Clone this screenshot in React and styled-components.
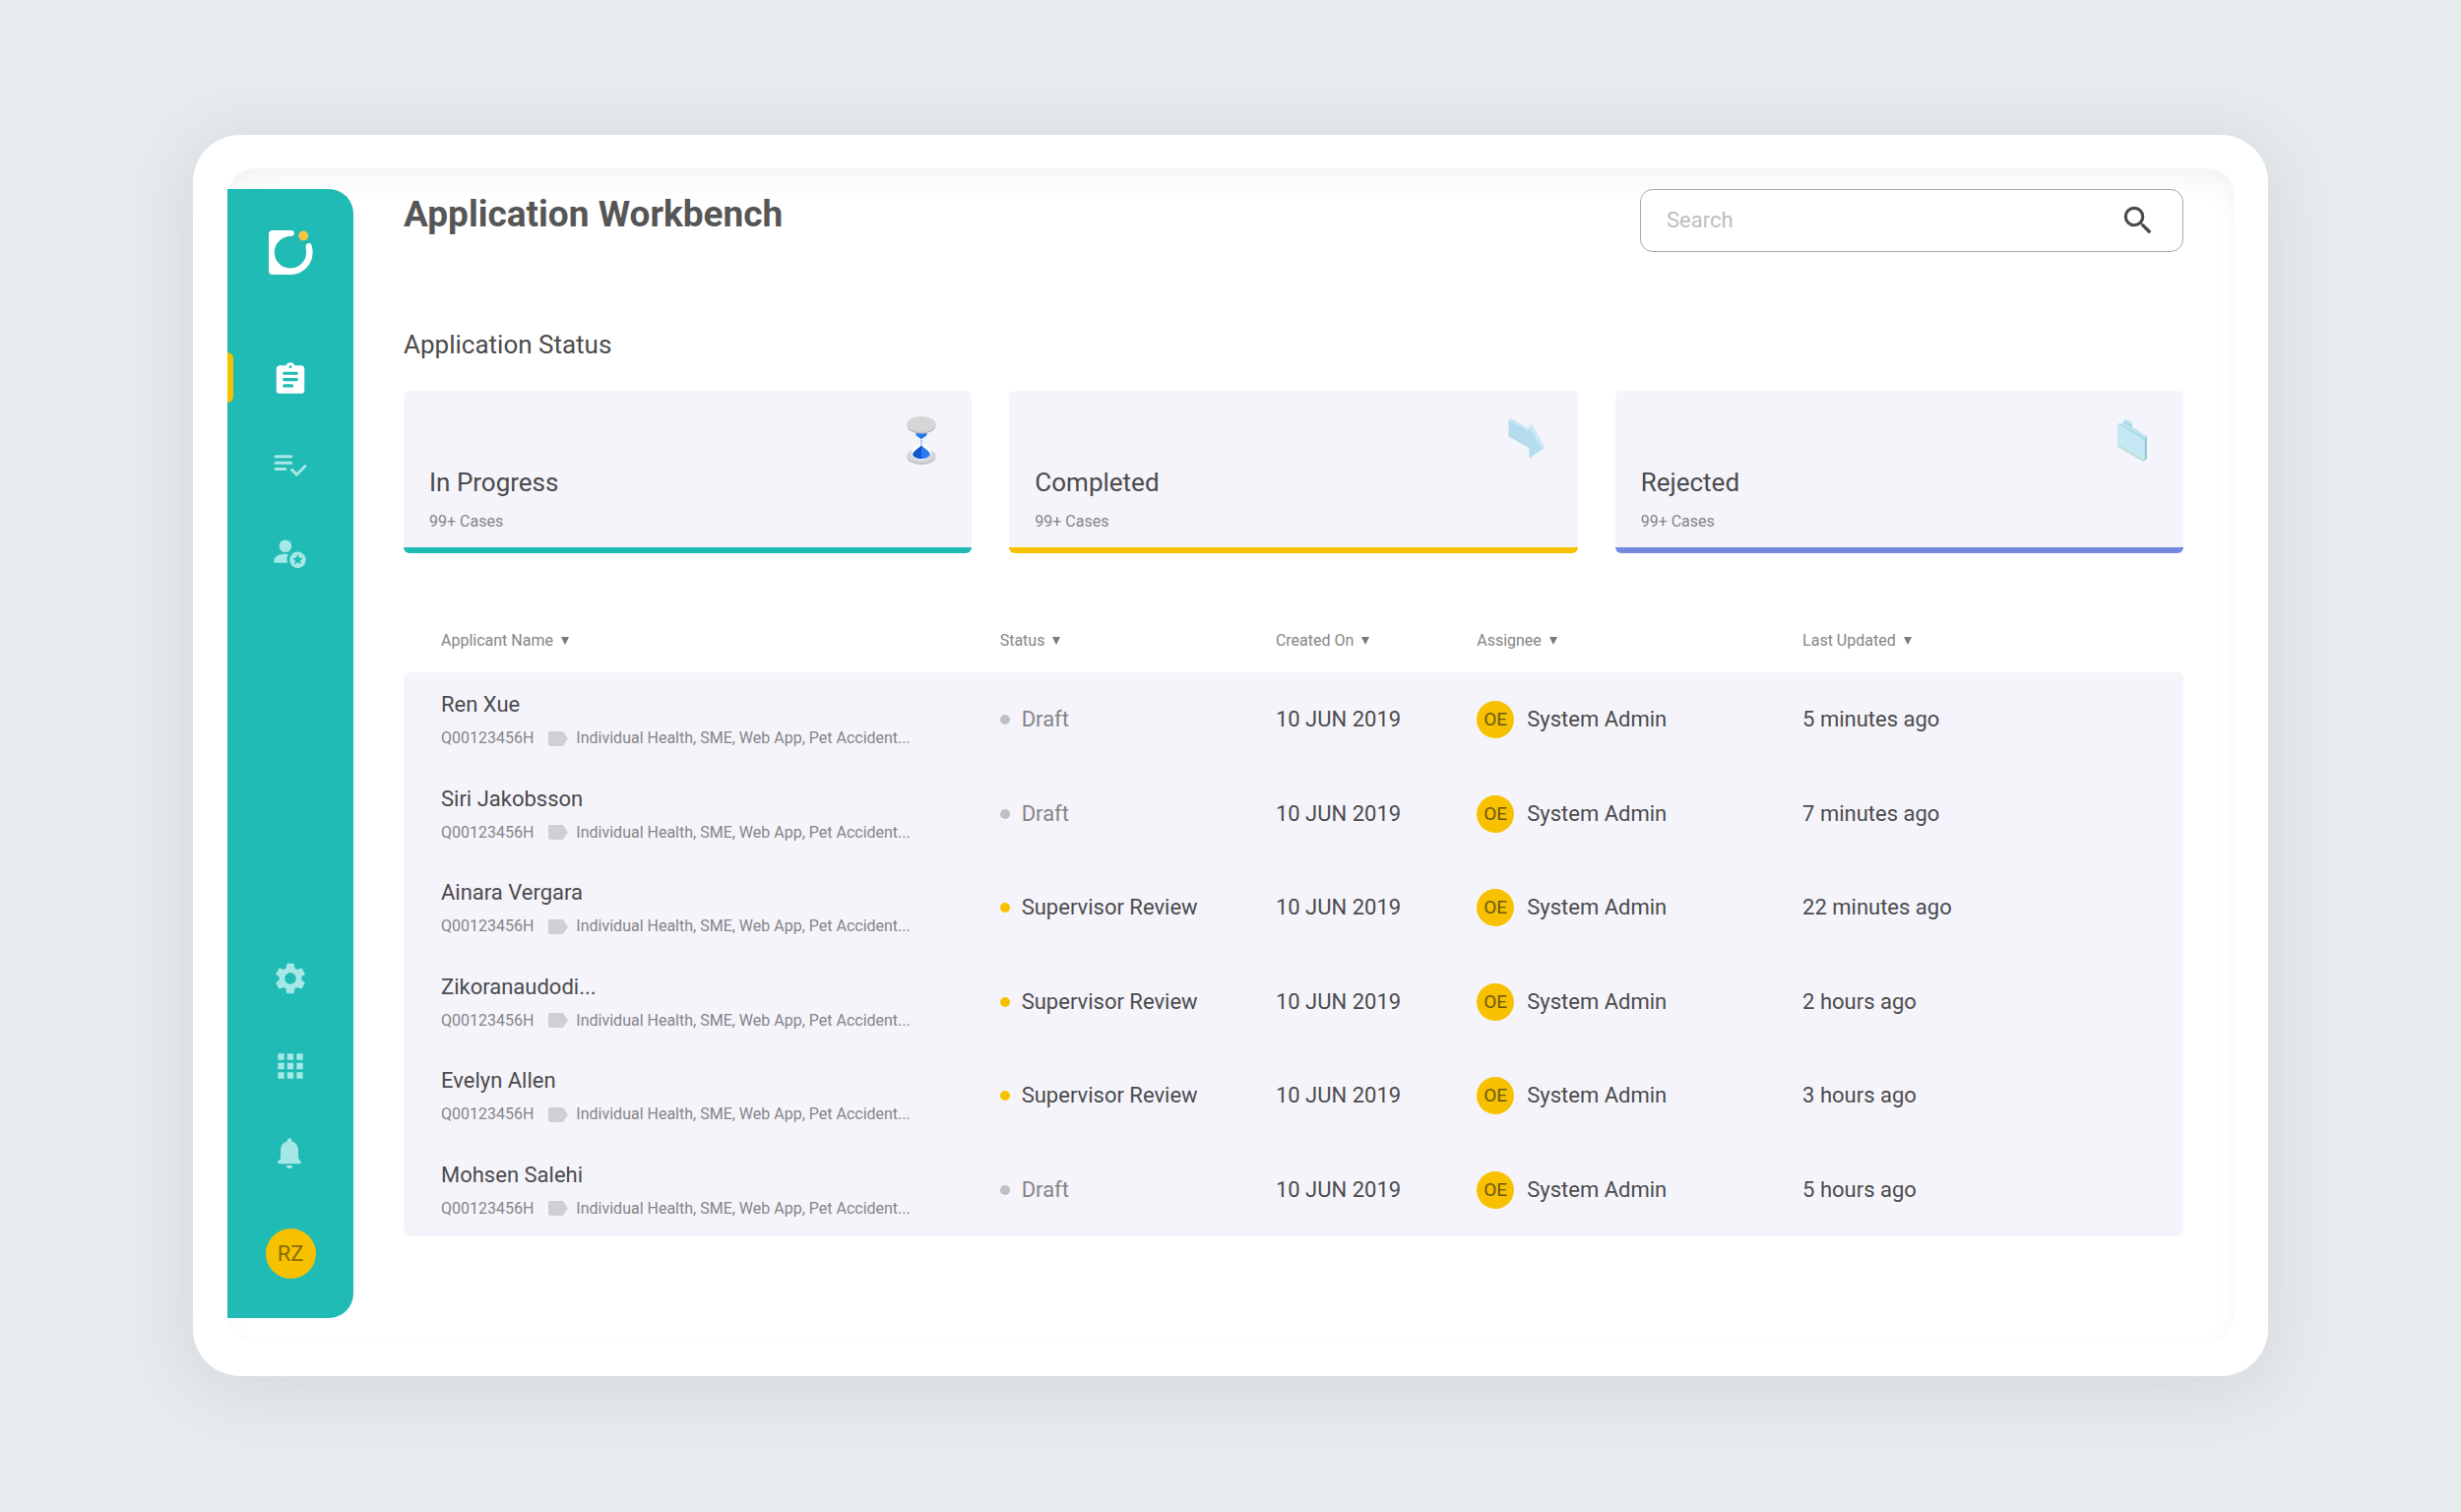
import React from "react";
import styled, { createGlobalStyle } from "styled-components";
import { MdSearch, MdSettings, MdApps } from "react-icons/md";

const teal = "#1fbbb4";
const yellow = "#f8c100";
const ink = "#4b4b4d";
const muted = "#858588";
const panel = "#f5f4fb";

const GlobalStyle = createGlobalStyle`
  *, *::before, *::after { box-sizing: border-box; }
  body {
    margin: 0;
    background: #e6ebee;
    color: ${ink};
    font-family: Roboto, "Liberation Sans", sans-serif;
    font-size: 22px;
    line-height: 28px;
  }
  h1, h2, h3, p, ul { margin: 0; padding: 0; font-weight: 400; }
  button, input { font: inherit; color: inherit; }
  button { border: 0; padding: 0; background: none; cursor: pointer; }
`;

const Page = styled.div`
  display: flex;
  min-height: 100vh;
  padding: 137px 196px 138px;
`;

const Frame = styled.div`
  display: flex;
  flex: 1;
  min-width: 0;
  padding: 34px 34px 34px 35px;
  border-radius: 48px;
  background: #fff;
  box-shadow: 0 10px 70px rgba(60, 60, 70, 0.12);
`;

const Screen = styled.div`
  display: flex;
  flex: 1;
  min-width: 0;
  padding: 21px 0 25px;
  border-radius: 28px;
  background: #fff;
  box-shadow: inset 0 16px 34px -10px rgba(0, 0, 0, 0.06), inset 0 0 24px rgba(0, 0, 0, 0.012);
`;

const Sidebar = styled.aside`
  display: flex;
  flex-direction: column;
  align-items: center;
  flex: none;
  width: 128px;
  padding: 39px 0 40px;
  border-radius: 0 25px 25px 0;
  background: ${teal};
`;

const HomeLink = styled.a`
  display: grid;
  place-items: center;
  width: 51px;
  height: 51px;
`;

const NavGroup = styled.nav`
  display: flex;
  flex-direction: column;
  gap: 38px;
  width: 100%;
  margin-top: ${(p) => (p.$bottom ? "auto" : "76px")};
`;

const NavItem = styled.a`
  position: relative;
  display: grid;
  place-items: center;
  height: 51px;
  color: ${(p) => (p.$active ? "#fff" : "#a6e8e5")};

  &::before {
    content: "";
    display: ${(p) => (p.$active ? "block" : "none")};
    position: absolute;
    left: 0;
    top: 0;
    width: 6px;
    height: 100%;
    border-radius: 0 6px 6px 0;
    background: ${yellow};
  }

  svg { width: 38px; height: 38px; }
`;

const ProfileButton = styled.button`
  width: 51px;
  height: 51px;
  margin-top: 51px;
  border-radius: 50%;
  background: ${yellow};
  color: #8a6c08;
`;

const Main = styled.main`
  flex: 1;
  min-width: 0;
  padding: 0 52px 0 51px;
`;

const Header = styled.header`
  display: flex;
  justify-content: space-between;
  align-items: flex-start;
`;

const PageTitle = styled.h1`
  font-size: 37px;
  font-weight: 700;
  line-height: 52px;
  color: #565656;
`;

const SearchBox = styled.form`
  display: flex;
  align-items: center;
  width: 552px;
  height: 64px;
  padding: 0 26px;
  border: 1px solid #acacac;
  border-radius: 13px;
  background: #fff;

  button { display: grid; color: #4a4a4a; }
  svg { width: 38px; height: 38px; }
`;

const SearchInput = styled.input`
  flex: 1;
  min-width: 0;
  padding: 0;
  border: 0;
  outline: 0;
  background: none;

  &::placeholder { color: #bdbdbd; opacity: 1; }
`;

const SectionTitle = styled.h2`
  margin-top: 79px;
  font-size: 26px;
  line-height: 30px;
`;

const Cards = styled.div`
  display: grid;
  grid-template-columns: repeat(3, 1fr);
  gap: 38px;
  margin-top: 32px;
`;

const Card = styled.article`
  display: flex;
  flex-direction: column;
  padding: 26px 26px 16px;
  border-bottom: 6px solid ${(p) => p.$accent};
  border-radius: 6px;
  background: ${panel};

  svg { width: 51px; height: 51px; align-self: flex-end; }
`;

const CardTitle = styled.h3`
  margin-top: 1px;
  font-size: 26px;
  line-height: 30px;
`;

const CardCount = styled.p`
  margin-top: 15px;
  font-size: 16px;
  line-height: 20px;
  color: ${muted};
`;

const Table = styled.table`
  width: 100%;
  margin-top: 57px;
  border-collapse: separate;
  border-spacing: 0;
  table-layout: fixed;
  white-space: nowrap;
`;

const HeadCell = styled.th`
  width: ${(p) => p.$width};
  height: 64px;
  padding: 0 0 0 ${(p) => (p.$first ? "38px" : "0")};
  text-align: left;
  font-weight: 400;
`;

const SortButton = styled.button`
  display: flex;
  align-items: center;
  gap: 8px;
  font-size: 16px;
  line-height: 20px;
  color: ${muted};

  svg { width: 8px; height: 8px; }
`;

const Row = styled.tr`
  height: 95px;
  &:nth-child(odd) { height: 96px; }
  &:first-child td:first-child { border-top-left-radius: 6px; }
  &:first-child td:last-child { border-top-right-radius: 6px; }
  &:last-child td:first-child { border-bottom-left-radius: 6px; }
  &:last-child td:last-child { border-bottom-right-radius: 6px; }
`;

const Cell = styled.td`
  padding: 0;
  background: ${panel};
  &:first-child { padding-left: 38px; }
`;

const Details = styled.div`
  display: flex;
  align-items: center;
  margin-top: 10px;
  font-size: 16px;
  line-height: 20px;
  color: ${muted};

  svg { width: 20px; height: 15px; margin: 0 8px 0 15px; }
`;

const Status = styled.div`
  display: flex;
  align-items: center;
  gap: 12px;
  color: ${(p) => (p.$draft ? muted : ink)};

  &::before {
    content: "";
    width: 10px;
    height: 10px;
    border-radius: 50%;
    background: ${(p) => (p.$draft ? "#c0c0c3" : yellow)};
  }
`;

const Assignee = styled.div`
  display: flex;
  align-items: center;
  gap: 13px;
`;

const Initials = styled.span`
  display: grid;
  place-items: center;
  width: 38px;
  height: 38px;
  border-radius: 50%;
  background: ${yellow};
  font-size: 19px;
  color: #6b5716;
`;

const Logo = () => (
  <svg width="45" height="45" viewBox="0 0 45 45" aria-hidden="true">
    <path
      fill="#fff"
      d="M4 0H23C25.500 0 26.500 2 25.500 4C25 5.400 24 5.900 22.500 6.100A16.200 16.200 0 1 0 37.800 19C37.600 17.500 37.500 16.500 38 15C38.700 12.900 42 12.300 43.200 14.500C44.200 17 44.600 19.500 44.600 22A22.500 22.500 0 0 1 22.500 45H4A4 4 0 0 1 0 41V4A4 4 0 0 1 4 0Z"
    />
    <circle cx="35.200" cy="5.500" r="5" fill="#f7c543" />
  </svg>
);

const ClipboardIcon = () => (
  <svg viewBox="0 -1 24 24" aria-hidden="true">
    <path fill="currentColor" d="M19 3h-4.200C14.400 1.800 13.300 1 12 1s-2.400.8-2.800 2H5c-1.100 0-2 .9-2 2v14c0 1.100.9 2 2 2h14c1.100 0 2-.9 2-2V5c0-1.100-.9-2-2-2z" />
    <circle cx="12" cy="3.900" r="0.900" fill={teal} />
    <path d="M8 8h8M8 12h8M8 16h5" stroke={teal} strokeWidth="2" strokeLinecap="round" fill="none" />
  </svg>
);

const ListCheckIcon = () => (
  <svg viewBox="0 0 24 24" aria-hidden="true" fill="none" stroke="currentColor" strokeWidth="1.900" strokeLinecap="round" strokeLinejoin="miter">
    <path d="M2.500 6.200h10M2.500 10.200h10M2.500 14.200h6.200M13 14.700l3.100 3.100 5.300-5.500" />
  </svg>
);

const PersonStarIcon = () => (
  <svg viewBox="0 0 24 24" aria-hidden="true" fill="currentColor">
    <circle cx="8.800" cy="7.400" r="4" />
    <path d="M1.600 18.200v-1.800c0-2.600 4-3.900 7.200-3.900.6 0 1.300 0 1.900.2-1 1.600-1.300 3.700-.5 5.500z" />
    <circle cx="16.700" cy="16.300" r="5.200" />
    <path fill={teal} d="M16.700 12.700l.95 2.250 2.450.2-1.850 1.600.55 2.400-2.100-1.280-2.100 1.280.55-2.400-1.850-1.600 2.450-.2z" />
  </svg>
);

const BellIcon = () => (
  <svg viewBox="0 0 24 24" aria-hidden="true" fill="currentColor">
    <path d="M11.400 2c.9 0 1.500.7 1.500 1.500v.6c2.600.7 4.200 3 4.200 5.900v5.200l1.500 1.500c.6.600.2 1.700-.7 1.700h-13c-.9 0-1.300-1.100-.7-1.700l1.500-1.500V10c0-2.900 1.600-5.200 4.200-5.900v-.6c0-.8.600-1.500 1.500-1.500z" />
    <path d="M9.400 19.500h4c0 1.100-.9 2-2 2s-2-.9-2-2z" />
  </svg>
);

const HourglassIcon = () => (
  <svg viewBox="0 0 51 51" aria-hidden="true">
    <ellipse cx="26" cy="41.500" rx="14.500" ry="7.500" fill="#c3c2c8" />
    <ellipse cx="26" cy="39.500" rx="14.500" ry="7.500" fill="#d7d6da" />
    <path d="M16 37c0-4 4-7 10-10 6 3 10 6 10 10 0 9-20 9-20 0z" fill="#fff" />
    <path d="M26 29c2 3.500 8.800 6 8.800 9.500 0 2.700-4 4.500-8.800 4.500z" fill="#2a7bf3" />
    <path d="M26 29c-2 3.500-8.800 6-8.800 9.500 0 2.700 4 4.500 8.800 4.500z" fill="#0f58cf" />
    <path d="M20.500 16h11v2.500c0 2-4 2.600-5.500 5-1.500-2.400-5.500-3-5.500-5z" fill="#2476ee" />
    <path d="M26 24.500v4" stroke="#2476ee" strokeWidth="1.200" strokeDasharray="1.300 1.200" />
    <ellipse cx="26" cy="9.700" rx="14.500" ry="8" fill="#bdbcc1" />
    <ellipse cx="26" cy="8" rx="14.500" ry="8" fill="#d6d5d7" />
  </svg>
);

const ArrowIcon = () => (
  <svg viewBox="0 0 51 51" aria-hidden="true">
    <path d="M6.500 4L9.500 2.500 28 13.500V32.500L6.500 20.500z" fill="#b5dcee" />
    <path d="M6.500 4L9.500 2.500 28 13.500V16z" fill="#c9e8f5" />
    <path d="M27 10.500Q28 8 31 9L43.500 31.500 41 33z" fill="#caeaf6" />
    <path d="M27 10.500L41 33 27.500 42.500z" fill="#b2deef" />
    <path d="M41 33l2.500-1.500L29 42l-1.500.5z" fill="#c3e5f1" />
  </svg>
);

const FolderIcon = () => (
  <svg viewBox="0 0 51 51" aria-hidden="true">
    <path d="M11 7l5 1.500V5l3-1.500 6 3.500v4l15 9.500v21l-2.500 3L11 30z" fill="#a4d6e3" />
    <path d="M16 5l3-1.500 6 3.500-3 1.500z" fill="#b9e2ef" />
    <path d="M13 7l1.500-1L40 20.500 38 22z" fill="#c4e7f1" />
    <path d="M38 22l2-1.500v22L38 45z" fill="#9acbd6" />
    <path d="M10 9.500Q10 7 12.200 8.200L35.500 22.500Q37.500 24 37.500 26V43.500Q37.500 46 35.500 44.800L11.500 31Q10 30 10 28.500z" fill="#c5e8f4" />
    <path d="M10 28.500v1.500l1.500 1.600 24 14q2.300.8 2.300-1.700V42q-.3 2-2.300 1L11.500 29.500z" fill="#bcdcd9" />
  </svg>
);

const TagIcon = () => (
  <svg viewBox="0 0 20 15" aria-hidden="true">
    <path fill="#d0cfd5" d="M2 0h11.500c.9 0 1.600.3 2.100 1L20 7.500 15.600 14c-.5.7-1.200 1-2.100 1H2a2 2 0 0 1-2-2V2a2 2 0 0 1 2-2z" />
  </svg>
);

const SortIcon = () => (
  <svg viewBox="0 0 8 8" aria-hidden="true">
    <path fill="#7a7a7d" d="M0 0h8L4 8z" />
  </svg>
);

const cards = [
  { title: "In Progress", accent: teal, Icon: HourglassIcon },
  { title: "Completed", accent: yellow, Icon: ArrowIcon },
  { title: "Rejected", accent: "#7289de", Icon: FolderIcon },
];

const columns = [
  { label: "Applicant Name", width: "33.5%" },
  { label: "Status", width: "15.5%" },
  { label: "Created On", width: "11.3%" },
  { label: "Assignee", width: "18.3%" },
  { label: "Last Updated", width: "auto" },
];

const applicants = [
  { name: "Ren Xue", status: "Draft", updated: "5 minutes ago" },
  { name: "Siri Jakobsson", status: "Draft", updated: "7 minutes ago" },
  { name: "Ainara Vergara", status: "Supervisor Review", updated: "22 minutes ago" },
  { name: "Zikoranaudodi...", status: "Supervisor Review", updated: "2 hours ago" },
  { name: "Evelyn Allen", status: "Supervisor Review", updated: "3 hours ago" },
  { name: "Mohsen Salehi", status: "Draft", updated: "5 hours ago" },
];

export default function App() {
  return (
    <>
      <GlobalStyle />
      <Page>
        <Frame>
          <Screen>
            <Sidebar>
              <HomeLink href="#home" aria-label="Home"><Logo /></HomeLink>
              <NavGroup aria-label="Main">
                <NavItem href="#applications" aria-label="Applications" $active><ClipboardIcon /></NavItem>
                <NavItem href="#tasks" aria-label="Tasks"><ListCheckIcon /></NavItem>
                <NavItem href="#members" aria-label="Members"><PersonStarIcon /></NavItem>
              </NavGroup>
              <NavGroup aria-label="Tools" $bottom>
                <NavItem href="#settings" aria-label="Settings"><MdSettings /></NavItem>
                <NavItem href="#apps" aria-label="Apps"><MdApps /></NavItem>
                <NavItem href="#notifications" aria-label="Notifications"><BellIcon /></NavItem>
              </NavGroup>
              <ProfileButton type="button">RZ</ProfileButton>
            </Sidebar>
            <Main>
              <Header>
                <PageTitle>Application Workbench</PageTitle>
                <SearchBox role="search" onSubmit={(e) => e.preventDefault()}>
                  <SearchInput type="text" placeholder="Search" aria-label="Search" />
                  <button type="submit" aria-label="Submit search"><MdSearch /></button>
                </SearchBox>
              </Header>
              <SectionTitle>Application Status</SectionTitle>
              <Cards>
                {cards.map(({ title, accent, Icon }) => (
                  <Card key={title} $accent={accent}>
                    <Icon />
                    <CardTitle>{title}</CardTitle>
                    <CardCount>99+ Cases</CardCount>
                  </Card>
                ))}
              </Cards>
              <Table>
                <thead>
                  <tr>
                    {columns.map((c, i) => (
                      <HeadCell key={c.label} scope="col" $width={c.width} $first={i === 0}>
                        <SortButton type="button">{c.label}<SortIcon /></SortButton>
                      </HeadCell>
                    ))}
                  </tr>
                </thead>
                <tbody>
                  {applicants.map((a) => (
                    <Row key={a.name}>
                      <Cell>
                        {a.name}
                        <Details>
                          <span>Q00123456H</span>
                          <TagIcon />
                          <span>Individual Health, SME, Web App, Pet Accident...</span>
                        </Details>
                      </Cell>
                      <Cell><Status $draft={a.status === "Draft"}>{a.status}</Status></Cell>
                      <Cell>10 JUN 2019</Cell>
                      <Cell><Assignee><Initials>OE</Initials>System Admin</Assignee></Cell>
                      <Cell>{a.updated}</Cell>
                    </Row>
                  ))}
                </tbody>
              </Table>
            </Main>
          </Screen>
        </Frame>
      </Page>
    </>
  );
}
